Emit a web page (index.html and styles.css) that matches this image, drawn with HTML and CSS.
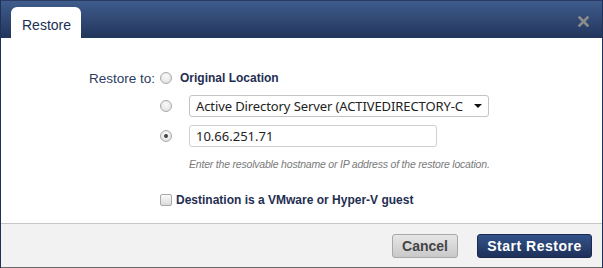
FILE: index.html
```html
<!DOCTYPE html>
<html lang="en">
<head>
  <meta charset="UTF-8">
  <meta name="viewport" content="width=device-width,initial-scale=1">
  <title>Restore</title>
  <link rel="stylesheet" href="styles.css">
</head>
<body>
  <div class="dialog">
    <div class="header">
      <div class="tab">Restore</div>
      <svg class="close" width="11" height="11" viewBox="0 0 11 11">
        <path d="M1.5 1.5 L9.5 9.5 M9.5 1.5 L1.5 9.5" stroke="#8c8c8c" stroke-width="2.6" stroke-linecap="square"/>
      </svg>
    </div>

    <div class="content">
      <div class="grid">
        <span class="fieldLabel">Restore to:</span>
        <label class="opt">
          <span class="radio"></span>
          <span>Original Location</span>
        </label>

        <span class="radio r2"></span>
        <div class="select">
          <span class="selText">Active Directory Server (ACTIVEDIRECTORY-C</span>
          <span class="caret"></span>
        </div>

        <span class="radio checked r3"></span>
        <div class="textInput">10.66.251.71</div>

        <p class="help">Enter the resolvable hostname or IP address of the restore location.</p>

        <label class="opt check">
          <span class="checkbox"></span>
          <span>Destination is a VMware or Hyper-V guest</span>
        </label>
      </div>
    </div>

    <div class="footer">
      <button class="btn cancel">Cancel</button>
      <button class="btn primary">Start Restore</button>
    </div>
  </div>
</body>
</html>
```

FILE: styles.css
```css
html, body { margin:0; padding:0; background:#fff; }
body { font-family:"Liberation Sans", Arial, sans-serif; width:603px; height:268px; overflow:hidden; }

.dialog { width:603px; height:268px; box-sizing:border-box; border-left:1px solid #1f3157; border-right:1px solid #1f3157; display:flex; flex-direction:column; }

.header { height:38px; flex:none; box-sizing:border-box; border-top:1px solid #2a3c63; background:linear-gradient(#3f5c8c, #22355b); display:flex; align-items:flex-end; padding-left:10px; position:relative; }
.tab { background:#fff; height:31px; width:70px; box-sizing:border-box; border-radius:6px 6px 0 0; font-size:14px; color:#1b3056; padding:10px 0 0 11px; }
.close { position:absolute; right:13px; top:15px; }

.content { flex:1; padding-top:28px; }
.grid { display:grid; grid-template-columns:159px 29px 300px; grid-template-rows:24px 27px 30px auto auto; }

.fieldLabel { grid-column:1; grid-row:1; font-size:13.5px; color:#2c3c5e; text-align:right; padding-right:5px; align-self:center; }
.opt { grid-column:2 / 4; grid-row:1; display:flex; align-items:center; gap:8px; font-size:12px; font-weight:bold; color:#1f2e52; }

.radio { width:12px; height:12px; box-sizing:border-box; border:1px solid #a9a9a9; border-radius:50%; background:radial-gradient(circle at 50% 35%, #fafafa, #dcdcdc); display:inline-block; flex:none; position:relative; }
.r2 { grid-column:2; grid-row:2; align-self:end; margin-bottom:5px; }
.r3 { grid-column:2; grid-row:3; align-self:end; margin-bottom:5px; }
.radio.checked::after { content:""; position:absolute; left:3px; top:3px; width:4px; height:4px; border-radius:50%; background:#444; }

.select { grid-column:3; grid-row:2; align-self:end; height:22px; box-sizing:border-box; border:1px solid #c4c4c4; border-radius:3px; display:flex; align-items:center; padding:0 6px; font-family:"Noto Sans", "Open Sans", sans-serif; font-size:13px; color:#222; background:#fff; overflow:hidden; }
.selText { flex:1; min-width:0; white-space:nowrap; overflow:hidden; letter-spacing:-0.1px; }
.caret { flex:none; width:0; height:0; border-left:4px solid transparent; border-right:4px solid transparent; border-top:4px solid #111; margin-left:4px; }

.textInput { grid-column:3; grid-row:3; align-self:end; width:248px; height:22px; box-sizing:border-box; border:1px solid #d0d0d0; border-radius:3px; padding:0 6px; display:flex; align-items:center; font-family:"Noto Sans", "Open Sans", sans-serif; font-size:13px; color:#222; }

.help { grid-column:3; grid-row:4; margin:10px 0 0; font-size:10.5px; letter-spacing:-0.2px; font-style:italic; color:#7a7a7a; line-height:15px; white-space:nowrap; }

.check { grid-row:5; margin-top:21px; gap:4px; height:14px; }
.checkbox { width:12px; height:12px; box-sizing:border-box; border:1px solid #a9a9a9; border-radius:2px; background:linear-gradient(#fafafa, #dcdcdc); flex:none; }

.footer { height:45px; flex:none; box-sizing:border-box; border-top:1px solid #c6c6c6; border-bottom:1px solid #6a6a6a; background:#f2f2f2; display:flex; justify-content:flex-end; align-items:center; gap:19px; padding-right:10px; padding-top:1px; }
.btn { height:24px; box-sizing:border-box; border-radius:3px; font-family:"Liberation Sans", Arial, sans-serif; font-size:14px; font-weight:bold; padding:0; cursor:pointer; }
.cancel { width:66px; border:1px solid #a8a8a8; background:linear-gradient(#e6e6e6, #c9c9c9); color:#444; }
.primary { width:115px; border:1px solid #1a2a4d; background:linear-gradient(#34538a, #1d3159); color:#fff; letter-spacing:0.5px; }
```
